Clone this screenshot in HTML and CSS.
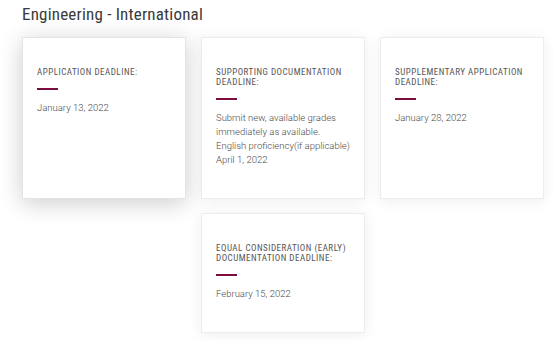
FILE: index.html
```html
<html>
<head>
<title>Engineering - International</title>
<meta charset="UTF-8">
<link rel="stylesheet" href="styles.css">
</head>
<body>
<h2>Engineering - International</h2>

<div class="deadlines">
	<div class="card card-hover">
		<div class="card-title">Application Deadline:</div>
		<div class="bar"></div>
		<div class="card-text">January 13, 2022</div>
	</div>
	<div class="card">
		<div class="card-title">Supporting Documentation Deadline:</div>
		<div class="bar"></div>
		<div class="card-text">
			Submit new, available grades immediately as available.<br>
			English proficiency(if applicable)<br>
			April 1, 2022
		</div>
	</div>
	<div class="card">
		<div class="card-title">Supplementary Application Deadline:</div>
		<div class="bar"></div>
		<div class="card-text">January 28, 2022</div>
	</div>
	<div class="card card-middle">
		<div class="card-title">Equal Consideration (Early) Documentation Deadline:</div>
		<div class="bar"></div>
		<div class="card-text">February 15, 2022</div>
	</div>
</div>
</body>
</html>
```

FILE: styles.css
```css
html {
	background-color: white;
}

body {
	margin: 0;
	padding: 0 10px 0 22px;
	font-family: Roboto, "Liberation Sans", sans-serif;
	color: #333;
}

h2 {
	margin: 4px 0 13px 0;
	font-size: 17px;
	font-weight: 400;
	font-stretch: 85%;
	letter-spacing: 0.2px;
	color: #3a3a3a;
}

.deadlines {
	display: grid;
	grid-template-columns: repeat(3, 164px);
	column-gap: 15px;
	row-gap: 14px;
}

.card {
	background: white;
	border: 1px solid #ececec;
	box-shadow: 0 2px 14px rgba(0, 0, 0, 0.07);
	padding: 29px 14px 31px 14px;
	box-sizing: border-box;
}

.card-hover {
	border-color: #e4e4e4;
	box-shadow: 0 4px 22px rgba(0, 0, 0, 0.2);
}

.card-middle {
	grid-column: 2;
}

.card-title {
	font-size: 9px;
	line-height: 10px;
	font-stretch: 80%;
	text-transform: uppercase;
	letter-spacing: 0.5px;
	color: #555;
}

.bar {
	width: 21px;
	height: 2px;
	background: #7b0d3e;
	margin: 11px 0 11px 0;
}

.card-text {
	font-size: 9.5px;
	line-height: 14px;
	font-weight: 300;
	color: #4a4a4a;
}
```
